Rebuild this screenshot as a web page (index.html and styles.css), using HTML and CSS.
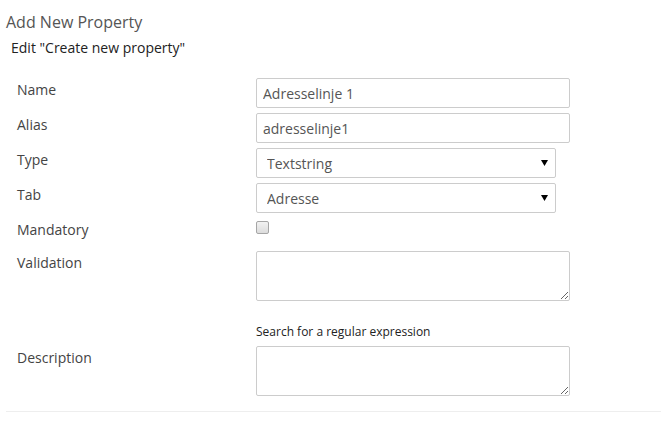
FILE: index.html
```html
<!DOCTYPE html>
<html>
<head>
<meta charset="utf-8">
<link rel="stylesheet" href="styles.css">
</head>
<body>
<div class="page">
  <h1 class="title">Add New Property</h1>
  <p class="subtitle">Edit "Create new property"</p>
  <form class="form">
    <div class="row">
      <label class="label">Name</label>
      <div class="control"><input class="text" type="text" value="Adresselinje 1"></div>
    </div>
    <div class="row">
      <label class="label">Alias</label>
      <div class="control"><input class="text" type="text" value="adresselinje1"></div>
    </div>
    <div class="row">
      <label class="label">Type</label>
      <div class="control"><select class="select"><option>Textstring</option></select></div>
    </div>
    <div class="row">
      <label class="label">Tab</label>
      <div class="control"><select class="select"><option>Adresse</option></select></div>
    </div>
    <div class="row row-check">
      <label class="label">Mandatory</label>
      <div class="control"><input class="check" type="checkbox"></div>
    </div>
    <div class="row">
      <label class="label">Validation</label>
      <div class="control">
        <textarea class="area"></textarea>
        <div class="help">Search for a regular expression</div>
      </div>
    </div>
    <div class="row">
      <label class="label">Description</label>
      <div class="control"><textarea class="area"></textarea></div>
    </div>
  </form>
  <hr class="rule">
</div>
</body>
</html>
```

FILE: styles.css
```css
html, body {
  margin: 0;
  padding: 0;
  background: #fff;
}
body {
  font-family: "Open Sans", "Liberation Sans", sans-serif;
  color: #444;
}
.page {
  padding: 10px 0 0 6px;
}
.title {
  margin: 0;
  font-size: 16px;
  font-weight: 400;
  line-height: 24px;
  color: #555;
}
.subtitle {
  margin: 4px 0 0 5px;
  font-size: 14px;
  line-height: 20px;
  color: #222;
}
.form {
  margin-top: 20px;
  display: flex;
  flex-direction: column;
  gap: 5px;
}
.row {
  display: grid;
  grid-template-columns: 250px 1fr;
}
.label {
  padding: 2px 0 0 11px;
  font-size: 14px;
  line-height: 20px;
  color: #444;
}
.row-check {
  height: 28px;
}
.control {
  display: flex;
  flex-direction: column;
  align-items: flex-start;
}
.text, .select, .area {
  box-sizing: border-box;
  border: 1px solid #ccc;
  border-radius: 2px;
  background: #fff;
  font-family: "Open Sans", "Liberation Sans", sans-serif;
  font-size: 14px;
  color: #555;
  margin: 0;
  outline: none;
}
.text {
  width: 314px;
  height: 30px;
  padding: 0 6px;
}
.select {
  width: 300px;
  height: 30px;
  padding: 0 10px;
  -webkit-appearance: none;
  appearance: none;
  background-image: url("data:image/svg+xml;utf8,<svg xmlns='http://www.w3.org/2000/svg' width='7' height='6'><path d='M0 0H7L3.5 6Z' fill='%23000'/></svg>");
  background-repeat: no-repeat;
  background-position: right 7px center;
}
.area {
  width: 314px;
  height: 50px;
  padding: 4px 6px;
}
.check {
  -webkit-appearance: none;
  appearance: none;
  width: 13px;
  height: 13px;
  margin: 3px 0 0 0;
  border: 1px solid #a6a6a6;
  border-radius: 2px;
  background: linear-gradient(#f2f2f2, #dcdcdc);
}
.help {
  margin-top: 22px;
  margin-bottom: 1px;
  font-size: 12px;
  line-height: 17px;
  color: #222;
}
.rule {
  margin: 15px 0 0 0;
  border: 0;
  border-top: 1px solid #eee;
}
```
